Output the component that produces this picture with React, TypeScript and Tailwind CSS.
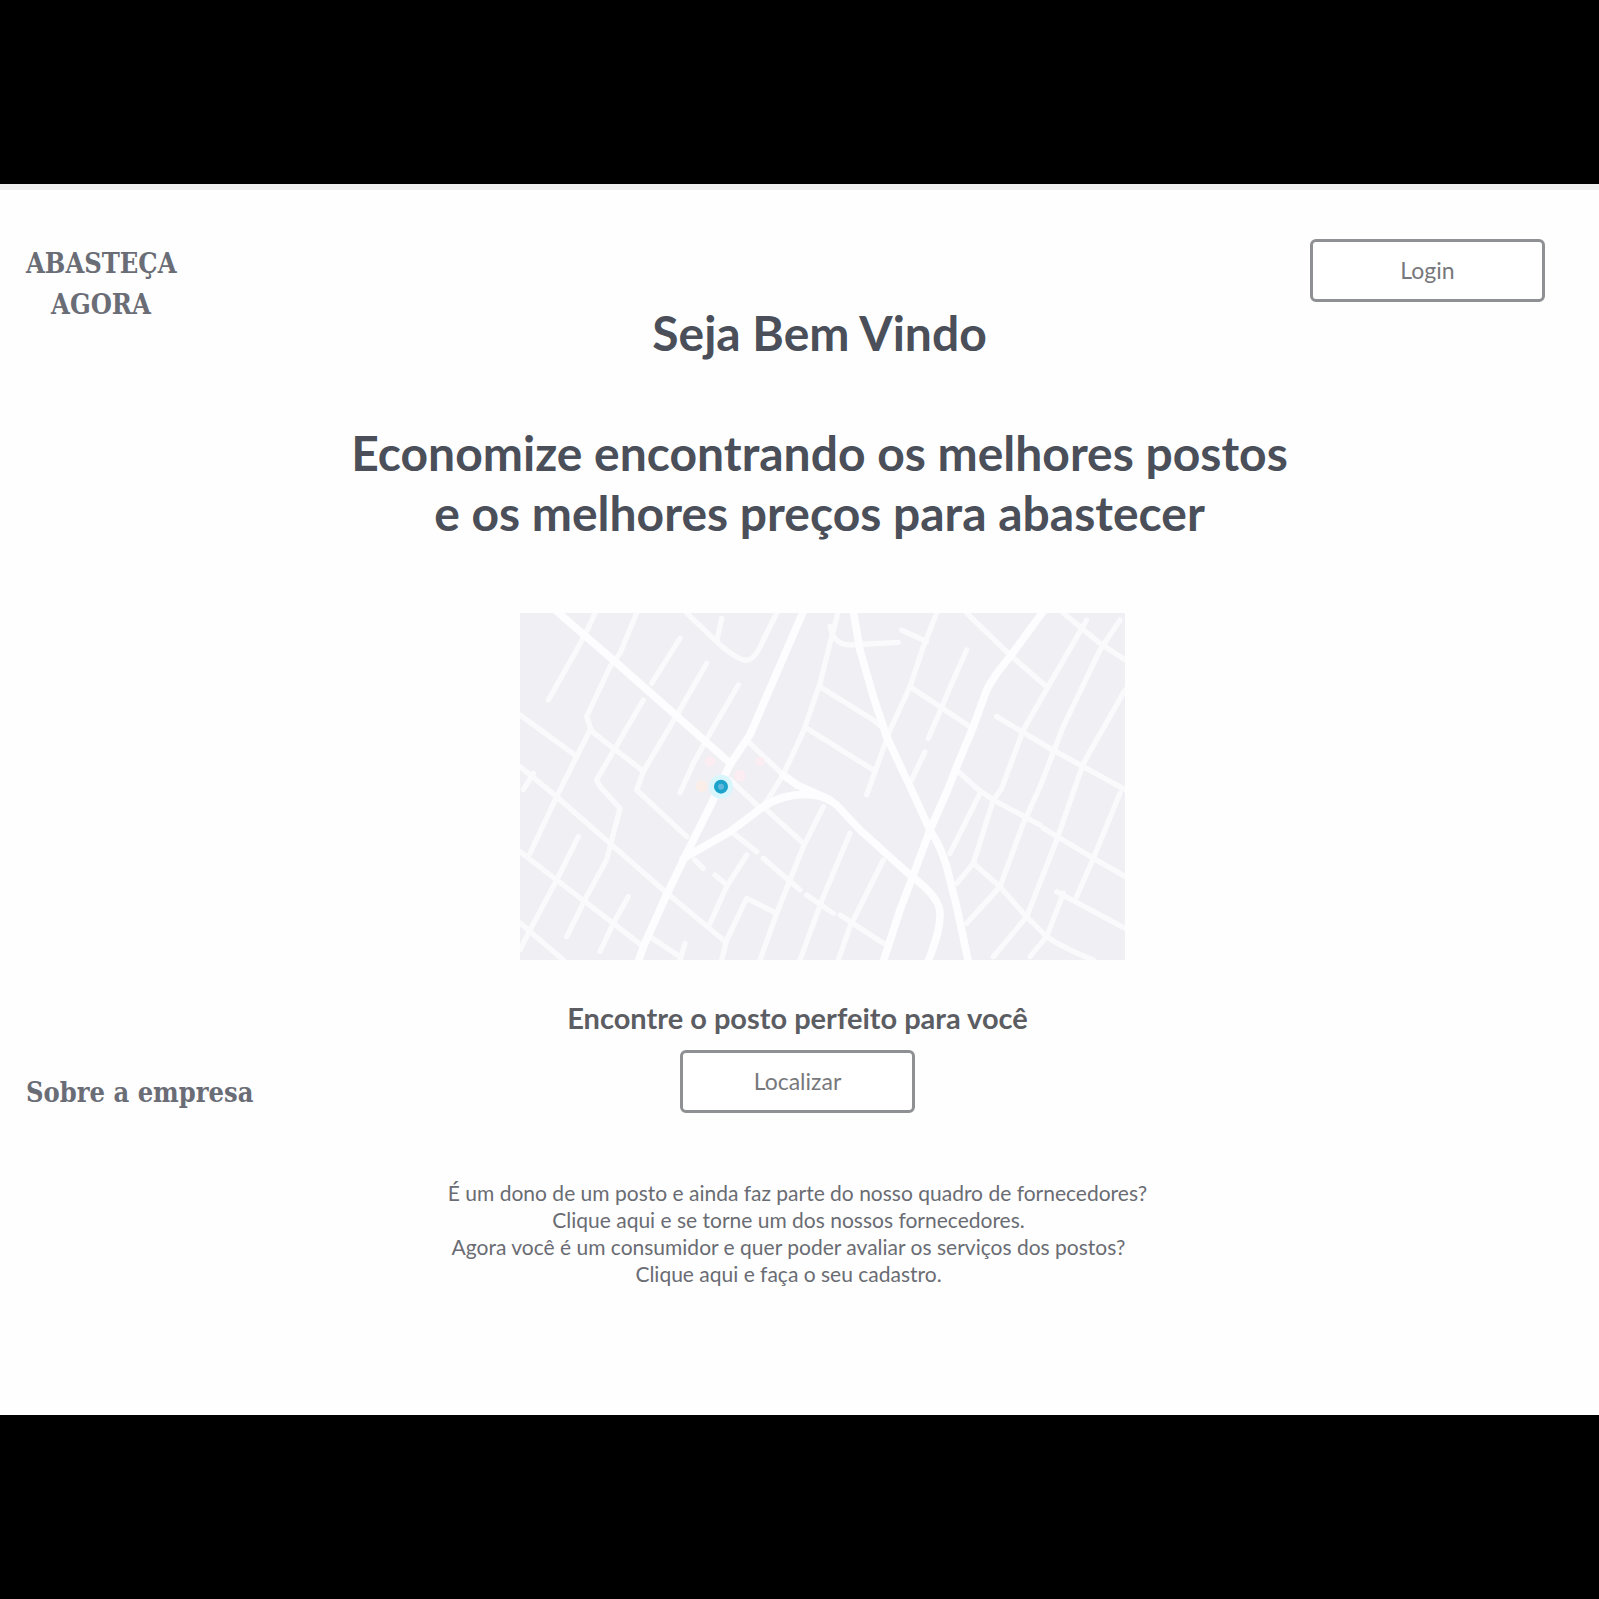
const mainRoads = [
  'M110 -5 L290 150 L630 450',
  'M850 -5 L770 180 L690 365 L630 455 L570 581 L500 721 L440 845 L370 1001 L355 1045',
  'M490 736 L630 656 L730 581 C780 550 830 540 880 546 Q920 552 950 576 L1020 651 L1170 786 C1230 830 1260 870 1260 901 C1262 950 1240 1000 1225 1045',
  'M1000 -5 L1020 111 L1060 251 L1100 371 L1165 510 L1230 651 Q1262 700 1280 761 L1310 881 L1345 1045',
  'M1570 -5 L1470 131 Q1420 190 1400 231 L1360 341 L1310 461 L1285 526 L1230 651 L1180 786 L1140 891 L1090 1045',
  'M790 486 L830 515 L930 560',
];

const streets = [
  'M955 -5 L930 91 L900 211 L850 355 L790 485 L730 581',
  'M690 391 L790 486',
  'M630 500 L720 585',
  'M225 0 L200 55 L170 111 L85 261',
  'M350 0 L300 121 L270 161 L200 311 L215 355 L370 475',
  'M480 76 L395 211',
  'M560 151 L480 290 L370 475 L350 531 L500 671',
  'M655 216 L570 361 L520 451 L480 540',
  'M370 261 L230 500 L240 521 L300 586 L270 701 L260 740 L200 850 L140 971',
  'M210 351 L110 551 L30 721',
  'M0 306 L170 430',
  'M0 461 L110 551 L430 831 L610 981',
  'M40 481 L10 530',
  'M0 716 L110 801 L280 931 L370 1001',
  'M175 671 L110 801 L30 951 L0 1010',
  'M0 930 L130 1041',
  'M325 851 L280 931 L240 1016',
  'M390 971 L480 1031',
  'M495 991 L480 1041',
  'M640 661 L710 716',
  'M730 736 L840 831',
  'M860 846 L940 901',
  'M960 906 L1090 991',
  'M740 591 L850 691',
  'M910 581 L850 701 L770 901 L720 1041',
  'M680 726 L620 821 L570 931',
  'M585 786 L620 816',
  'M525 741 L550 766',
  'M770 901 L680 856 L620 981 L605 1041',
  'M990 661 L910 851 L840 1041',
  'M1090 741 L990 941 L955 1041',
  'M500 0 L590 86 Q650 140 680 142 Q705 140 730 81 L770 0',
  'M605 16 L590 86',
  'M900 221 L1060 321 L1095 351',
  'M860 346 L1060 471',
  'M930 40 Q940 96 990 96 L1135 88',
  'M1145 51 L1220 86',
  'M1250 0 L1210 101 L1170 221 L1110 351 L1040 546',
  'M1170 221 L1350 341',
  'M1340 111 L1300 201 L1225 376',
  'M1215 416 L1175 501',
  'M1340 0 L1470 126 L1580 221',
  'M1630 0 L1740 91 L1815 140',
  'M1700 21 L1590 211 L1510 351 L1445 526 L1420 561 L1360 751 L1310 811',
  'M1800 21 L1740 111 L1630 340 L1560 521 L1510 631 L1440 821 L1340 931',
  'M1815 231 L1690 451 L1610 681 L1520 911 L1420 1031',
  'M1430 311 L1590 406 L1815 530',
  'M1310 471 L1370 526 L1420 561 L1560 636',
  'M1570 646 L1720 736 L1815 790',
  'M1380 541 L1290 721',
  'M1360 751 L1440 821 L1510 901 L1580 971 Q1640 1010 1720 1041',
  'M1800 541 L1720 736 L1670 851',
  'M1610 836 L1815 946',
  'M1630 841 L1580 971 L1530 1031',
];

function StreetMap() {
  return (
    <svg viewBox="0 0 1815 1041" className="w-[605px] max-w-full" role="img" aria-label="Mapa">
      <rect width="1815" height="1041" fill="#efeff4" />
      <g fill="none" stroke="#fdfdff" strokeLinecap="round" strokeLinejoin="round">
        <g strokeWidth="16" opacity="0.85">
          {streets.map((d) => (
            <path key={d} d={d} />
          ))}
        </g>
        <g strokeWidth="23">
          {mainRoads.map((d) => (
            <path key={d} d={d} />
          ))}
        </g>
      </g>
      <circle cx="545" cy="520" r="18" fill="#fbeee8" />
      <circle cx="570" cy="445" r="16" fill="#fbedf1" />
      <circle cx="660" cy="488" r="18" fill="#fbedf1" />
      <circle cx="720" cy="445" r="14" fill="#fbedf1" />
      <circle cx="603" cy="521" r="36" fill="#d8f6fb" />
      <circle cx="603" cy="521" r="15" fill="#5fb8dc" stroke="#1ba3cb" strokeWidth="12" />
    </svg>
  );
}

function OutlineButton({ children }: { children: string }) {
  return (
    <button
      type="button"
      className="h-[63px] w-[235px] rounded-md border-[3px] border-[#8f9093] bg-white text-[23px] text-[#77787c]"
    >
      {children}
    </button>
  );
}

export default function App() {
  return (
    <div className="min-h-screen bg-black py-[184px] font-['Lato',sans-serif] text-[#4a4f59]">
      <main className="border-t-[6px] border-[#efefef] bg-[#fefefe] pr-[54px] pb-[128px] pl-[26px]">
        <header className="grid grid-cols-[1fr_auto_1fr] items-start pt-[49px]">
          <div className="mt-1 w-[150px] text-center font-['DejaVu_Serif_Condensed','DejaVu_Serif',serif] text-[27px] leading-[41px] font-bold text-[#6a6d76]">
            ABASTEÇA
            <br />
            AGORA
          </div>
          <div className="pt-[64px] pl-[68px] text-center text-5xl leading-[60px] font-bold">
            <h1>Seja Bem Vindo</h1>
            <h2 className="mt-[60px]">
              Economize encontrando os melhores postos
              <br />e os melhores preços para abastecer
            </h2>
          </div>
          <div className="flex justify-end">
            <OutlineButton>Login</OutlineButton>
          </div>
        </header>

        <div className="mt-[70px] flex justify-center pl-[74px]">
          <StreetMap />
        </div>

        <section className="grid grid-cols-[1fr_auto_1fr] items-end pt-[40px]">
          <h2 className="font-['DejaVu_Serif_Condensed','DejaVu_Serif',serif] text-[27px] leading-[41px] font-bold text-[#6a6d76]">
            Sobre a empresa
          </h2>
          <div className="flex flex-col items-center gap-[14px] pl-[24px]">
            <p className="text-[29px] leading-9 font-bold text-[#5b5d63]">Encontre o posto perfeito para você</p>
            <OutlineButton>Localizar</OutlineButton>
          </div>
        </section>

        <div className="mt-[66px] pl-[6px] text-center text-[21px] leading-[27px] text-[#6a6c73]">
          <p className="pl-[18px]">É um dono de um posto e ainda faz parte do nosso quadro de fornecedores?</p>
          <p>
            <a href="#fornecedores">Clique aqui e se torne um dos nossos fornecedores.</a>
          </p>
          <p>Agora você é um consumidor e quer poder avaliar os serviços dos postos?</p>
          <p>
            <a href="#cadastro">Clique aqui e faça o seu cadastro.</a>
          </p>
        </div>
      </main>
    </div>
  );
}
